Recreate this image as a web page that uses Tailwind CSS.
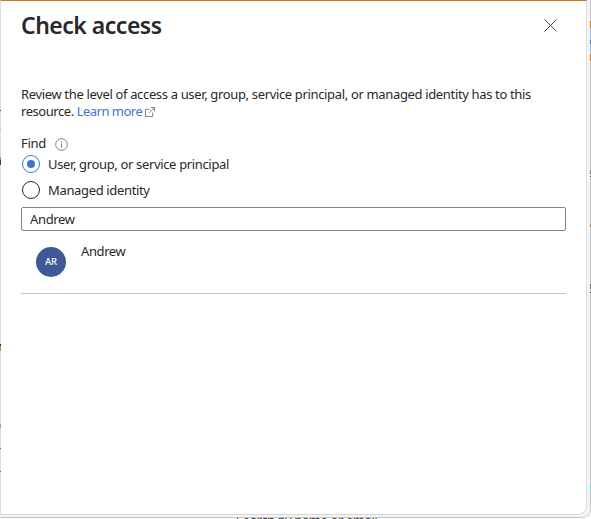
<!DOCTYPE html>
<html lang="en">
<head>
<meta charset="utf-8">
<title>Check access</title>
<script src="https://cdn.jsdelivr.net/npm/@tailwindcss/browser@4"></script>
</head>
<body class="relative h-[519px] w-[591px] overflow-hidden bg-white font-['Noto_Sans',sans-serif] text-[13px] text-[#292827]">
  <!-- page behind the dialog -->
  <div class="absolute left-[236px] top-[515px] whitespace-nowrap text-[13px] leading-[10px] tracking-[-0.4px] text-[#323130]">Search by name or email</div>
  <div class="absolute left-[590px] top-[21px] z-10 h-[7px] w-px bg-[#c47a22]"></div>
  <div class="absolute left-[590px] top-[28px] z-10 h-[26px] w-px bg-[#a9bfe0]"></div>
  <div class="absolute left-[590px] top-[54px] z-10 h-[7px] w-px bg-[#c47a22]"></div>

  <!-- dialog frame -->
  <div class="absolute left-0 top-0 h-[519px] w-[591px] rounded-br-[9px] border-r border-[#c8c8c8]"></div>
  <div class="absolute left-0 top-0 h-[518px] w-[590px] rounded-br-[9px] border-b border-[#c4c4c4] bg-[#f4f4f4]">
    <main class="flex h-[515px] w-[587px] flex-col rounded-br-[9px] border-b border-l border-r border-t border-b-[#d6d6d6] border-l-[#dedede] border-r-[#dedede] border-t-[#c9781c] bg-white pl-5 pr-5">
      <header class="flex h-[85px] items-start justify-between pr-[9px] pt-[8px]">
        <h1 class="text-[23px] font-semibold leading-[33px] tracking-[-0.5px]">Check access</h1>
        <svg class="mt-[10px] size-[13px]" viewBox="0 0 13 13" fill="none" stroke="#484644" stroke-width="1"><path d="M.5.5l12 12M12.5.5l-12 12"/></svg>
      </header>
      <p class="whitespace-nowrap leading-[17px] tracking-[-0.345px]">Review the level of access a user, group, service principal, or managed identity has to this<br><span class="tracking-[-0.45px]">resource. <a class="tracking-[-0.5px] text-[#4074d4]">Learn more</a></span><svg class="ml-[3px] inline size-[10px] align-[-1px]" viewBox="0 0 11 11" fill="none" stroke="#777" stroke-width="1"><path d="M5 2.5H.5v8h8V6M6.5.5h4v4M10.5.5L4.5 6.5"/></svg></p>
      <div class="mt-[14px] flex h-[20px] items-center"><span class="tracking-[-0.3px]">Find</span><svg class="ml-[9px] size-[13px]" viewBox="0 0 13 13" fill="none" stroke="#777"><circle cx="6.5" cy="6.5" r="5.8" stroke-width=".9"/><path d="M6.5 5.5v4M6.5 3.3v1.2"/></svg></div>
      <div class="-mt-px flex h-[23px] items-center gap-[8px] tracking-[-0.35px]"><span class="mb-px -mr-px ml-px flex size-[18px] items-center justify-center rounded-full border border-[#4074d4]"><span class="size-[8px] rounded-full bg-[#4074d4]"></span></span><span class="ml-px">User, group, or service principal</span></div>
      <div class="mt-[3px] flex h-[23px] items-center gap-[8px] tracking-[-0.35px]"><span class="mb-px -mr-px ml-px size-[18px] rounded-full border border-[#292827]"></span><span class="ml-px">Managed identity</span></div>
      <div class="mt-[5px] flex h-[24px] w-[545px] shrink-0 items-center rounded-[2px] border border-[#85837f] pl-[8px] pt-[2px] tracking-[-0.35px]">Andrew</div>
      <div class="flex h-[63px] w-[545px] shrink-0 items-start border-b border-[#c8c6c4] pl-[15px] pt-[16px]">
        <span class="flex size-[30px] items-center justify-center rounded-full bg-[#3f5998] pt-px text-[9.5px] font-medium text-white">AR</span>
        <span class="-mt-[6px] ml-[15px] leading-[20px] tracking-[-0.4px]">Andrew</span>
      </div>
    </main>
  </div>

  <!-- clipped edges of the page on the left and right -->
  <i class="absolute left-0 top-[110px] h-px w-px bg-[#453a8c]"></i>
  <i class="absolute left-0 top-[129px] h-px w-px bg-[#aaa]"></i>
  <i class="absolute left-0 top-[157px] h-[3px] w-px bg-[#d08336]"></i>
  <i class="absolute left-0 top-[160px] h-[5px] w-px bg-[#553a30]"></i>
  <i class="absolute left-0 top-[344px] h-[2px] w-px bg-[#333]"></i>
  <i class="absolute left-0 top-[346px] h-[5px] w-px bg-[#d08336]"></i>
  <i class="absolute left-0 top-[424px] h-[4px] w-px bg-[#60bce8]"></i>
  <i class="absolute left-0 top-[448px] h-px w-px bg-[#666]"></i>
  <i class="absolute left-0 top-[471px] h-px w-px bg-[#666]"></i>
  <i class="absolute left-[590px] top-[40px] z-10 h-[4px] w-px bg-[#5a78b4]"></i>
  <i class="absolute left-[590px] top-[170px] h-[2px] w-px bg-[#b87b40]"></i>
  <i class="absolute left-[590px] top-[172px] h-[2px] w-px bg-[#4f7bb4]"></i>
  <i class="absolute left-[590px] top-[176px] h-px w-px bg-[#444]"></i>
  <i class="absolute left-[590px] top-[224px] h-[3px] w-px bg-[#b87b40]"></i>
  <i class="absolute left-[590px] top-[284px] h-[2px] w-px bg-[#a45b40]"></i>
  <i class="absolute left-[590px] top-[286px] h-[3px] w-px bg-[#4f7bb4]"></i>
  <i class="absolute left-[590px] top-[292px] h-px w-px bg-[#743030]"></i>
  <i class="absolute left-[590px] top-[484px] h-[6px] w-px bg-[#8dd3e6]"></i>
</body>
</html>
